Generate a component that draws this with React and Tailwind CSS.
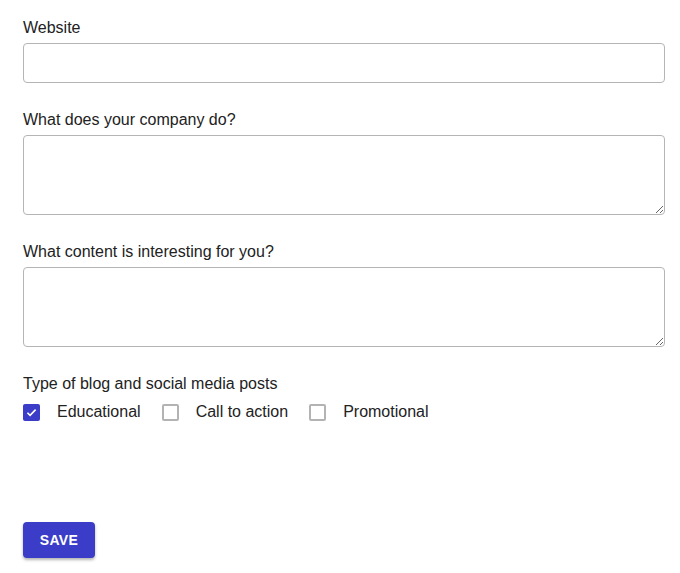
import { useState } from 'react';

function Checkbox({ label, checked, onChange }) {
  return (
    <label className="flex items-center cursor-pointer">
      <span
        className={`w-[17px] h-[17px] rounded-[2px] flex items-center justify-center ${
          checked ? 'bg-[#3b3dc8]' : 'border-2 border-[#b3b3b3] bg-white'
        }`}
      >
        {checked && (
          <svg width="13" height="13" viewBox="0 0 12 12" fill="none">
            <path d="M2.2 6.2l2.5 2.5L9.8 3.4" stroke="white" strokeWidth="1.5" />
          </svg>
        )}
      </span>
      <input type="checkbox" className="hidden" checked={checked} onChange={onChange} />
      <span className="ml-[17px] text-[16px] text-[#222]">{label}</span>
    </label>
  );
}

export default function App() {
  const [types, setTypes] = useState({ educational: true, cta: false, promo: false });

  const toggle = (k) => setTypes({ ...types, [k]: !types[k] });

  return (
    <div className="min-h-[573px] bg-white px-[23px] pt-[18px] font-['Liberation_Sans',Arial,sans-serif] text-[#222]">
      {/* Website */}
      <div>
        <label className="block text-[16px] leading-5 mb-[5px]">Website</label>
        <input
          type="text"
          className="block w-[642px] h-10 rounded border border-[#b5b5b5] px-3 outline-none"
        />
      </div>

      {/* Company */}
      <div className="mt-[27px]">
        <label className="block text-[16px] leading-5 mb-[5px]">What does your company do?</label>
        <textarea className="block w-[642px] h-20 rounded border border-[#b5b5b5] px-3 py-2 outline-none" />
      </div>

      {/* Content */}
      <div className="mt-[27px]">
        <label className="block text-[16px] leading-5 mb-[5px]">What content is interesting for you?</label>
        <textarea className="block w-[642px] h-20 rounded border border-[#b5b5b5] px-3 py-2 outline-none" />
      </div>

      {/* Post types */}
      <div className="mt-[27px]">
        <p className="text-[16px] leading-5">Type of blog and social media posts</p>
        <div className="flex items-center gap-[21px] mt-2 h-5">
          <Checkbox label="Educational" checked={types.educational} onChange={() => toggle('educational')} />
          <Checkbox label="Call to action" checked={types.cta} onChange={() => toggle('cta')} />
          <Checkbox label="Promotional" checked={types.promo} onChange={() => toggle('promo')} />
        </div>
      </div>

      <button className="mt-[100px] w-[72px] h-9 rounded bg-[#3b3dc8] text-white text-[14px] font-bold tracking-wide shadow-[0_2px_3px_rgba(0,0,0,0.3)]">
        SAVE
      </button>
    </div>
  );
}
